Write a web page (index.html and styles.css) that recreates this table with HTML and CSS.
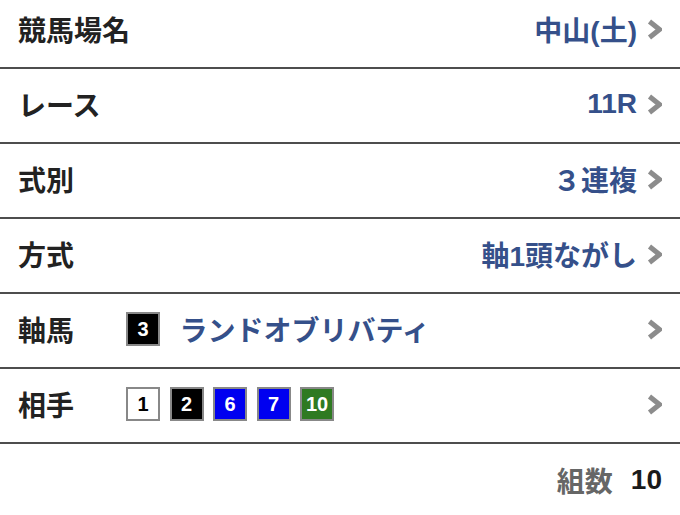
FILE: index.html
```html
<!DOCTYPE html>
<html lang="ja">
<head>
<meta charset="utf-8">
<link rel="stylesheet" href="styles.css">
</head>
<body>
<div class="list">
  <div class="row">
    <span class="label">競馬場名</span>
    <span class="value">中山(土)</span>
    <svg class="chev" viewBox="0 0 15 21"><polyline points="2.5,2.5 12.5,10.5 2.5,18.5"/></svg>
  </div>
  <div class="row">
    <span class="label">レース</span>
    <span class="value">11R</span>
    <svg class="chev" viewBox="0 0 15 21"><polyline points="2.5,2.5 12.5,10.5 2.5,18.5"/></svg>
  </div>
  <div class="row">
    <span class="label">式別</span>
    <span class="value">３連複</span>
    <svg class="chev" viewBox="0 0 15 21"><polyline points="2.5,2.5 12.5,10.5 2.5,18.5"/></svg>
  </div>
  <div class="row">
    <span class="label">方式</span>
    <span class="value">軸1頭ながし</span>
    <svg class="chev" viewBox="0 0 15 21"><polyline points="2.5,2.5 12.5,10.5 2.5,18.5"/></svg>
  </div>
  <div class="row">
    <span class="label short">軸馬</span>
    <div class="horses">
      <span class="badge black">3</span>
      <span class="horse-name">ランドオブリバティ</span>
    </div>
    <svg class="chev" viewBox="0 0 15 21"><polyline points="2.5,2.5 12.5,10.5 2.5,18.5"/></svg>
  </div>
  <div class="row">
    <span class="label short">相手</span>
    <div class="horses">
      <span class="badge white">1</span>
      <span class="badge black">2</span>
      <span class="badge blue">6</span>
      <span class="badge blue">7</span>
      <span class="badge green">10</span>
    </div>
    <svg class="chev" viewBox="0 0 15 21"><polyline points="2.5,2.5 12.5,10.5 2.5,18.5"/></svg>
  </div>
  <div class="total">
    <span class="total-label">組数</span>
    <span class="total-num">10</span>
  </div>
</div>
</body>
</html>
```

FILE: styles.css
```css
html, body {
  margin: 0;
  padding: 0;
  background: #fff;
}
body {
  font-family: "Liberation Sans", "Noto Sans CJK JP", sans-serif;
  font-weight: bold;
  overflow: hidden;
}
.list {
  margin-top: -6px;
}
.row {
  display: flex;
  align-items: center;
  border-bottom: 2px solid #4d4d4d;
  padding: 0 18px 3px 18px;
  height: 70px;
}
.label {
  font-size: 28px;
  color: #222;
  flex: 0 0 auto;
}
.label.short {
  width: 108px;
}
.value {
  margin-left: auto;
  font-size: 28px;
  color: #35508a;
}
.chev {
  width: 15px;
  height: 21px;
  margin-left: 10px;
  flex: 0 0 auto;
}
.chev polyline {
  fill: none;
  stroke: #8c8c8c;
  stroke-width: 5;
}
.horses {
  flex: 1;
  display: flex;
  align-items: center;
  gap: 9.5px;
}
.badge {
  width: 30px;
  height: 30px;
  border: 2px solid #888;
  display: flex;
  align-items: center;
  justify-content: center;
  font-size: 20px;
  color: #fff;
  font-family: "Liberation Sans", sans-serif;
  font-weight: bold;
}
.badge.white { background: #fff; color: #000; }
.badge.black { background: #000; }
.badge.blue { background: #0000f0; }
.badge.green { background: #2f7a22; }
.horse-name {
  margin-left: 10px;
  font-size: 28px;
  color: #35508a;
}
.total {
  display: flex;
  justify-content: flex-end;
  align-items: center;
  height: 72px;
  padding: 0 18px;
}
.total-label {
  font-size: 28px;
  color: #666;
  margin-right: 18px;
}
.total-num {
  font-size: 28px;
  color: #1a1a1a;
}
```
